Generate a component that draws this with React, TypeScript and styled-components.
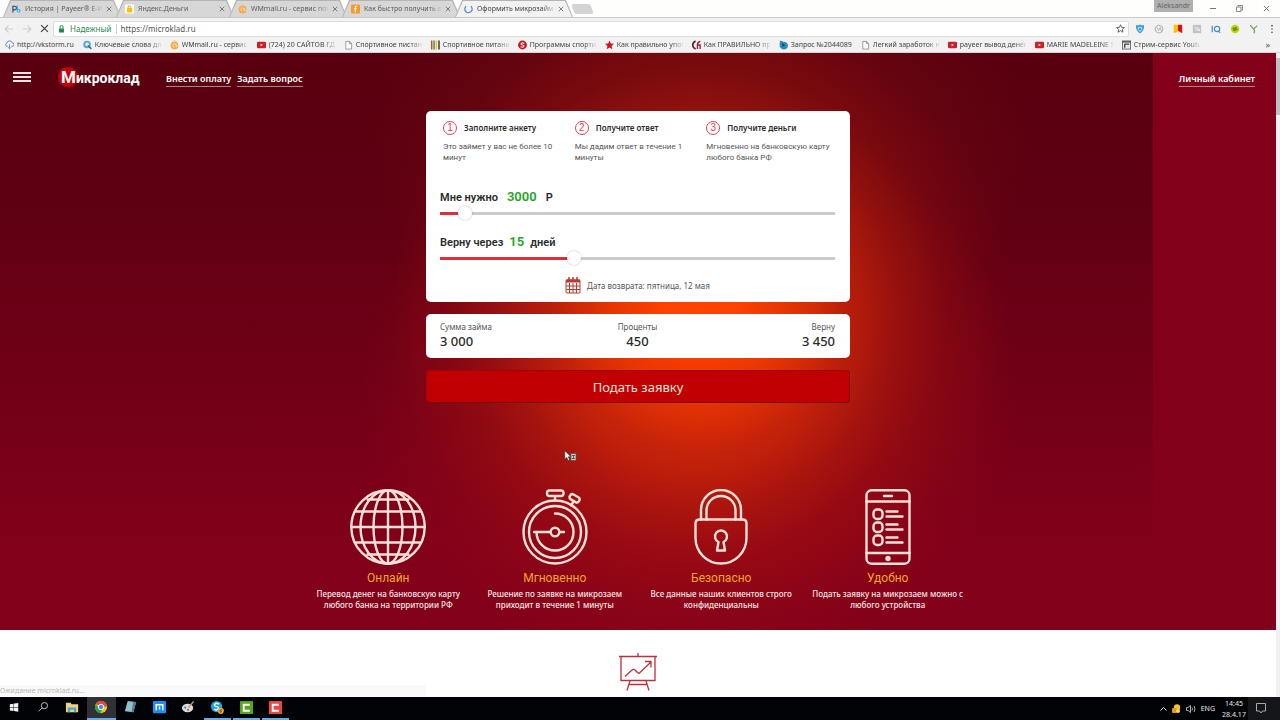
import React, { useState } from 'react';
import styled, { createGlobalStyle, css } from 'styled-components';

const GlobalStyle = createGlobalStyle`
  * { box-sizing: border-box; }
  body { margin: 0; background: #fff; font-family: "Noto Sans", "Open Sans", sans-serif; }
  button, input, a { font-family: inherit; }
  button { border: 0; padding: 0; background: none; color: inherit; cursor: pointer; }
  a { color: inherit; text-decoration: none; }
  svg { display: block; flex: none; }
  h1, h2, h3, p, ul, ol, dl, dd { margin: 0; padding: 0; }
  ul, ol { list-style: none; }
`;

const Screen = styled.div`
  min-height: 100vh;
  display: flex;
  flex-direction: column;
`;

/* ---------- browser chrome ---------- */

const TabStrip = styled.header`
  display: flex;
  justify-content: space-between;
  height: 18px;
  padding-left: 3px;
  background: #fefefd;
  border-bottom: 1px solid #c9c9c9;
`;

const Tabs = styled.div`
  display: flex;
  align-items: flex-end;
`;

const slant = 'polygon(7px 0, calc(100% - 7px) 0, 100% 100%, 0 100%)';

const TabEdge = styled.div<{ $active?: boolean }>`
  width: 118px;
  height: 17px;
  margin-right: -5px;
  padding: 1px 1px 0;
  clip-path: ${slant};
  background: #b4b4b4;
  position: relative;
  z-index: ${(p) => (p.$active ? 1 : 0)};
`;

const TabFace = styled.div<{ $active?: boolean }>`
  display: flex;
  align-items: center;
  gap: 4px;
  height: 16px;
  padding: 0 8px;
  clip-path: ${slant};
  background: ${(p) => (p.$active ? '#f2f2f2' : '#d6d7d6')};
  color: ${(p) => (p.$active ? '#444' : '#5c5c5c')};
`;

const fade = css`
  overflow: hidden;
  white-space: nowrap;
  mask-image: linear-gradient(to right, #000 calc(100% - 12px), rgba(0, 0, 0, 0.15));
`;

const TabTitle = styled.span`
  flex: 1;
  font-size: 7px;
  line-height: 14px;
  ${fade}
`;

const IconButton = styled.button`
  display: grid;
  place-items: center;
  flex: none;
`;

const NewTab = styled.button`
  width: 19px;
  height: 10px;
  margin: 0 0 3px 5px;
  background: #d2d3d2;
  border-radius: 2px;
  transform: skewX(20deg);
`;

const WindowControls = styled.div`
  display: flex;
  align-items: flex-start;
  color: #777;
`;

const UserBadge = styled.span`
  width: 39px;
  height: 12px;
  margin-right: 6px;
  background: #b0b0b0;
  color: #666;
  font-size: 7px;
  line-height: 11px;
  text-align: center;
`;

const WindowButton = styled(IconButton)`
  width: 27px;
  height: 16px;
`;

const Toolbar = styled.div`
  display: flex;
  align-items: center;
  height: 19px;
  padding-top: 2px;
  background: #f2f2f2;
`;

const NavButtons = styled.div`
  display: flex;
  flex: none;
  width: 53px;
  gap: 8px;
  padding-left: 4px;
`;

const Omnibox = styled.form`
  display: flex;
  align-items: center;
  flex: 1;
  height: 16px;
  padding: 0 3px 0 5px;
  background: #fff;
  border: 1px solid #dcdcdc;
  border-radius: 2px;
  font-size: 8px;
`;

const Secure = styled.span`
  padding: 0 4px 0 6px;
  margin-right: 4px;
  line-height: 10px;
  color: #2c8a52;
  border-right: 1px solid #ccc;
`;

const UrlInput = styled.input`
  flex: 1;
  min-width: 0;
  height: 12px;
  padding: 0;
  border: 0;
  outline: 0;
  background: transparent;
  font-size: 8px;
  color: #555;
`;

const Extensions = styled.div`
  display: flex;
  flex: none;
  padding-left: 1px;
`;

const ExtButton = styled(IconButton)`
  width: 19px;
  height: 14px;
  &:last-child { width: 17px; }
`;

const BookmarkBar = styled.nav`
  display: flex;
  align-items: center;
  gap: 9px;
  height: 16px;
  padding: 0 10px 0 5px;
  background: #f2f2f2;
  border-bottom: 1px solid #d8d2d2;
`;

const Bookmark = styled.a`
  display: flex;
  align-items: center;
  gap: 3px;
  flex: none;
  font-size: 7px;
  line-height: 14px;
  color: #444;
`;

const BookmarkText = styled.span<{ $whole?: boolean }>`
  ${(p) => (p.$whole ? 'white-space: nowrap;' : css`width: 66px; ${fade}`)}
`;

const More = styled.button`
  margin-left: auto;
  font-size: 9px;
  line-height: 12px;
  color: #555;
`;

/* ---------- web page ---------- */

const Viewport = styled.div`
  position: relative;
  flex: 1;
  display: flex;
`;

const Page = styled.div`
  flex: 1;
  min-width: 0;
  display: flex;
  flex-direction: column;
`;

const Scrollbar = styled.div`
  width: 4px;
  padding-top: 5px;
  background: #f1f1f1;
  &::before {
    content: '';
    display: block;
    height: 57px;
    background: #c1c1c1;
  }
`;

const Hero = styled.div`
  position: relative;
  padding-bottom: 20px;
  background-color: #82001a;
  background-image:
    radial-gradient(ellipse 310px 300px at 700px 255px,
      rgba(255, 68, 0, 1) 0, rgba(255, 66, 0, 0.97) 12%, rgba(245, 60, 0, 0.8) 30%,
      rgba(225, 48, 4, 0.56) 46%, rgba(200, 36, 6, 0.34) 64%, rgba(180, 24, 8, 0.16) 80%,
      rgba(150, 8, 14, 0) 100%),
    radial-gradient(ellipse 330px 290px at 690px 340px,
      rgba(195, 32, 12, 0.8) 0, rgba(190, 28, 12, 0.65) 30%, rgba(175, 18, 14, 0.35) 60%,
      rgba(150, 8, 18, 0) 100%),
    radial-gradient(ellipse 330px 240px at 700px 90px, rgba(170, 30, 14, 0.4) 0, rgba(140, 10, 16, 0) 100%),
    linear-gradient(to bottom, #58000f 0, #5f0012 26%, #740018 62%, #82001a 86%);
  background-size: 1153px 100%;
  background-repeat: no-repeat;
`;

const SiteHeader = styled.header`
  display: flex;
  align-items: center;
  height: 48px;
  padding: 0 21px 0 13px;
  color: #fff;
`;

const MenuButton = styled.button`
  display: flex;
  flex-direction: column;
  justify-content: space-between;
  width: 18px;
  height: 10px;
  margin-right: 27px;
  &::before, &::after, & > span {
    content: '';
    height: 2px;
    width: 100%;
    background: #f4e4e4;
  }
`;

const Logo = styled.a`
  display: block;
  width: 108px;
  padding-left: 3px;
  font-family: Roboto, sans-serif;
  font-size: 14px;
  line-height: 22px;
  font-weight: 700;
  background: radial-gradient(circle at 10px 11px, #c40008 9px, transparent 11px);
  &::first-letter { font-size: 17px; }
`;

const HeaderLinks = styled.nav`
  display: flex;
  flex: 1;
  gap: 6px;
  padding-top: 5px;
`;

const HeaderLink = styled.a`
  font-size: 9px;
  line-height: 14px;
  font-weight: 600;
  border-bottom: 1px solid #b08088;
  &:last-child { margin-left: auto; }
`;

const Calculator = styled.form`
  display: flex;
  flex-direction: column;
  gap: 12px;
  width: 424px;
  max-width: 100%;
  margin: 10px auto 0;
`;

const Card = styled.section`
  padding: 9px 15px 8px 14px;
  background: #fff;
  border-radius: 5px;
  color: #2b2b2b;
`;

const Steps = styled.ol`
  display: grid;
  grid-template-columns: repeat(3, 1fr);
  height: 67px;
`;

const Step = styled.li`
  padding-left: 3px;
`;

const StepHead = styled.div`
  display: flex;
  align-items: center;
  gap: 7px;
  height: 16px;
`;

const StepNumber = styled.span`
  display: grid;
  place-items: center;
  width: 14px;
  height: 14px;
  border: 1px solid #e2434f;
  border-radius: 50%;
  color: #e2434f;
  font-family: "Liberation Sans", Arial, sans-serif;
  font-size: 10px;
  line-height: 12px;
`;

const StepTitle = styled.h3`
  font-size: 8px;
  line-height: 12px;
  font-weight: 600;
`;

const StepText = styled.p`
  margin-top: 5px;
  font-family: Roboto, sans-serif;
  font-size: 8px;
  line-height: 11px;
  color: #555;
`;

const Field = styled.div`
  height: 45px;
`;

const FieldLabel = styled.label`
  display: flex;
  align-items: baseline;
  height: 19px;
  font-family: Roboto, sans-serif;
  font-size: 11px;
  line-height: 20px;
  font-weight: 600;
`;

const FieldValue = styled.output<{ $gap: number }>`
  margin: 0 ${(p) => p.$gap}px;
  font-size: 13px;
  color: #1fa51f;
`;

const Range = styled.input`
  display: block;
  width: 100%;
  height: 14px;
  margin: 0;
  appearance: none;
  outline: 0;
  background: linear-gradient(to right, #dd3038 var(--fill), #ccc var(--fill)) center / 100% 3px no-repeat;
  &::-webkit-slider-thumb {
    appearance: none;
    width: 14px;
    height: 14px;
    border-radius: 50%;
    background: #fff;
    box-shadow: 0 0 2px rgba(0, 0, 0, 0.3);
  }
`;

const ReturnDate = styled.p`
  display: flex;
  align-items: center;
  justify-content: center;
  gap: 6px;
  height: 17px;
  font-size: 8px;
  line-height: 12px;
  color: #555;
`;

const Summary = styled.dl`
  display: grid;
  grid-template-columns: repeat(3, 1fr);
  height: 27px;
`;

const SummaryItem = styled.div<{ $align: string }>`
  text-align: ${(p) => p.$align};
`;

const SummaryLabel = styled.dt`
  font-size: 8px;
  line-height: 8px;
  color: #555;
`;

const SummaryValue = styled.dd`
  font-size: 13px;
  line-height: 20px;
  font-weight: 500;
`;

const Submit = styled.button`
  height: 33px;
  border: 1px solid #a00404;
  border-right-color: #7c0408;
  border-bottom-color: #7c0408;
  border-radius: 4px;
  background: #c00000;
  color: #fbe3dc;
  font-size: 13px;
  line-height: 20px;
`;

const Features = styled.ul`
  display: grid;
  grid-template-columns: repeat(4, 1fr);
  width: 666px;
  max-width: 100%;
  margin: 86px auto 0;
`;

const Feature = styled.li`
  display: flex;
  flex-direction: column;
  align-items: center;
  text-align: center;
`;

const FeatureTitle = styled.h2`
  margin-top: 3px;
  font-family: Roboto, sans-serif;
  font-size: 12px;
  line-height: 20px;
  font-weight: 400;
  color: #f5a623;
`;

const FeatureText = styled.p`
  width: 160px;
  font-size: 8px;
  line-height: 11px;
  font-weight: 500;
  color: #fae6e2;
`;

const Cursor = styled.svg`
  position: absolute;
  left: 564px;
  top: 397px;
`;

const Benefits = styled.section`
  flex: 1;
  display: flex;
  justify-content: center;
  padding: 23px 0 6px;
  background: #fff;
`;

const StatusBubble = styled.div`
  position: absolute;
  left: 0;
  bottom: 1px;
  width: 426px;
  height: 11px;
  background: #f9f9f9;
  color: #b8b8b8;
  font-size: 7px;
  line-height: 12px;
`;

/* ---------- taskbar ---------- */

const Taskbar = styled.footer`
  display: flex;
  justify-content: space-between;
  height: 23px;
  background: #020307;
  color: #e8e8e8;
`;

const Apps = styled.div`
  display: flex;
`;

const AppButton = styled(IconButton)<{ $open?: boolean; $focused?: boolean }>`
  width: 29px;
  height: 23px;
  background: ${(p) => (p.$focused ? '#2f3136' : 'transparent')};
  border-bottom: 2px solid transparent;
  border-image: ${(p) =>
    p.$focused
      ? 'linear-gradient(#6aa9e2, #6aa9e2) 2'
      : p.$open
        ? 'linear-gradient(to right, transparent 10%, #6aa9e2 10%, #6aa9e2 90%, transparent 90%) 2'
        : 'none'};
`;

const Tray = styled.div`
  display: flex;
  align-items: center;
  gap: 5px;
  font-size: 7px;
`;

const Clock = styled.time`
  width: 28px;
  line-height: 11px;
  text-align: center;
`;

const Notices = styled(IconButton)`
  width: 32px;
  height: 23px;
  margin-left: -5px;
  padding-right: 6px;
  background: #15161a;
`;

/* ---------- icons ---------- */

const Fav = ({ children }: { children: React.ReactNode }) => (
  <svg width="9" height="10" viewBox="0 0 10 10" aria-hidden="true">{children}</svg>
);

const icons: Record<string, React.ReactNode> = {
  payeer: (
    <Fav>
      <path d="M1 9V2h2.2a1.8 1.8 0 010 3.8H1" fill="none" stroke="#44607a" strokeWidth="1.5" />
      <path d="M6 1v7M6 5.5h1.5a1.3 1.3 0 010 2.8H6" fill="none" stroke="#3fb0e6" strokeWidth="1.3" />
    </Fav>
  ),
  yandex: (
    <Fav>
      <rect width="10" height="10" rx="1" fill="#fff" />
      <rect x="2" y="4" width="6" height="5" rx="1" fill="#f5c400" />
      <path d="M3.5 4V1.8h3V4" fill="none" stroke="#d9a800" />
    </Fav>
  ),
  wm: (
    <Fav>
      <circle cx="5" cy="5.5" r="4.3" fill="#f6a94a" />
      <path d="M6.800 5.500a1.800 1.800 0 10-1.800 1.800M6.800 4v2.500q1 1 1.700-.5" fill="none" stroke="#fff1d8" strokeWidth=".8" />
      <path d="M2.500 2L5 0l2.500 1.500" fill="none" stroke="#f0c58a" />
    </Fav>
  ),
  orange: (
    <Fav>
      <rect width="10" height="10" rx="1" fill="#f79a2b" />
      <path d="M6.800 2q-2-.6-2 1.600V8.500M3.300 4.700H6.500" fill="none" stroke="#fff" strokeWidth="1.2" />
    </Fav>
  ),
  spinner: (
    <Fav>
      <path d="M2.200 2A4.100 4.100 0 107.500 1.800" fill="none" stroke="#4285d6" strokeWidth="1.300" />
    </Fav>
  ),
  cloud: (
    <Fav>
      <path d="M3 6.500H2.200a1.900 1.900 0 010-3.700A3 3 0 018 2.500a2 2 0 010 4H7M5 4.500V9M3.500 7.700L5 9.200l1.500-1.500" fill="none" stroke="#5b7fd0" />
    </Fav>
  ),
  key: (
    <Fav>
      <circle cx="4.500" cy="4.500" r="4.200" fill="#5aa9d6" />
      <circle cx="4.500" cy="4.200" r="2" fill="#e8f4fa" />
      <path d="M5.500 5.500L9.300 9.300" stroke="#2e6f9c" strokeWidth="1.600" />
    </Fav>
  ),
  yt: (
    <Fav>
      <rect y="1.500" width="10" height="7" rx="1.300" fill="#cf1f26" />
      <path d="M4 3.500v3l2.700-1.500z" fill="#fff" />
    </Fav>
  ),
  file: (
    <Fav>
      <path d="M2 1h4l2.500 2.500V9.500H2zM6 1v2.500h2.500" fill="#fff" stroke="#8a8a8a" strokeWidth=".9" />
    </Fav>
  ),
  bars: (
    <Fav>
      <path d="M.8 0v10" stroke="#d6452f" strokeWidth="1.600" />
      <path d="M3.400 0v10" stroke="#3f8f45" strokeWidth="1.600" />
      <path d="M6 0v10" stroke="#e8c51f" strokeWidth="1.600" />
      <path d="M8.900 0v10" stroke="#333" strokeWidth="1.600" />
    </Fav>
  ),
  sRed: (
    <Fav>
      <circle cx="5" cy="5" r="4.900" fill="#c8161d" />
      <path d="M6.900 3.300Q5 1.900 3.700 3.100T5 5t1.200 1.900T3 6.800" fill="none" stroke="#fff" strokeWidth="1.200" />
    </Fav>
  ),
  star: (
    <Fav>
      <path d="M5 0l1.400 3.300 3.600.3-2.700 2.400.8 3.600L5 7.700 1.900 9.600l.8-3.600L0 3.600l3.600-.3z" fill="#d0121b" />
    </Fav>
  ),
  sixes: (
    <Fav>
      <path d="M4 .500Q.8 2 .8 5T4 9.500" fill="none" stroke="#4a2030" strokeWidth="1.800" />
      <path d="M9.300 1Q6 1.500 6 5v4.500M6 5h3v4.500" fill="none" stroke="#a51c2c" strokeWidth="1.500" />
    </Fav>
  ),
  swirl: (
    <Fav>
      <path d="M1 0l4 1.500A4.300 4.300 0 115 10 4.500 4.500 0 01.7 5z" fill="#2a8fc0" />
      <path d="M3 2.500l4 2.500-3 2.500z" fill="#134d77" />
    </Fav>
  ),
  stream: (
    <Fav>
      <rect x=".5" y=".5" width="9" height="9" fill="#e8e8e8" stroke="#666" />
      <path d="M0 1.500h10M3 4h5M3 4v4" stroke="#444" strokeWidth="1.500" />
    </Fav>
  ),
};

const X = ({ s, c = '#666' }: { s: number; c?: string }) => (
  <svg width={s} height={s} viewBox="0 0 8 8" aria-hidden="true">
    <path d="M1 1l6 6M7 1L1 7" stroke={c} strokeWidth="1.100" />
  </svg>
);

const Arrow = ({ flip }: { flip?: boolean }) => (
  <svg width="10" height="10" viewBox="0 0 10 10" aria-hidden="true">
    <path d={flip ? 'M1 5h8M5.500 1.500L9 5 5.500 8.500' : 'M9 5H1M4.500 1.500L1 5l3.500 3.500'} fill="none" stroke="#cfcfcf" strokeWidth="1.100" />
  </svg>
);

const extensions: [string, React.ReactNode][] = [
  ['Защита', <><path d="M1 1.500Q4 2 6 .5q2 1.500 5 1 0 7-5 10-5-3-5-10z" fill="#3a9bd0" /><path d="M4 4h4v2.500L6 9 4 6.500z" fill="none" stroke="#dff" /></>],
  ['Метка', <><circle cx="6" cy="6" r="4.500" fill="none" stroke="#bbb" strokeWidth="1.500" /><path d="M3.500 4l2 4 2-4 2 6" fill="none" stroke="#aaa" /></>],
  ['Закладки', <><path d="M1 1h5v8l-5 2z" fill="#f8c400" /><path d="M6 1h5v10L6 8z" fill="#e01010" /></>],
  ['Панель', <><rect x="1" y="1" width="10" height="10" fill="#c2c2c2" /><path d="M3 4h2v4M7 4v4h2V6H7" fill="none" stroke="#f4f4f4" /></>],
  ['IQ', <><path d="M1.500 2v8" stroke="#4a90c0" strokeWidth="1.500" /><circle cx="7.300" cy="6" r="3.200" fill="none" stroke="#4a90c0" strokeWidth="1.400" /><path d="M8 8l3 2.500" stroke="#4a90c0" strokeWidth="1.300" /></>],
  ['Обмен', <><circle cx="6" cy="6" r="5" fill="#c4d600" /><path d="M3 5h5L6.500 3.500M9 7H4l1.500 1.500" fill="none" stroke="#3c6a20" strokeWidth="1.200" /></>],
  ['Росток', <path d="M1.500 1.500L5.500 6 10 2M5.500 6q2 2 .5 5" fill="none" stroke="#6fa55a" strokeWidth="1.400" />],
  ['Меню', <><circle cx="6" cy="2" r="1" fill="#555" /><circle cx="6" cy="6" r="1" fill="#555" /><circle cx="6" cy="10" r="1" fill="#555" /></>],
];

const Calendar = () => (
  <svg width="16" height="17" viewBox="0 0 16 17" aria-hidden="true">
    <g fill="none" stroke="#b9382f">
      <rect x="1" y="3" width="14" height="13" rx="1" />
      <path d="M1 4h14" strokeWidth="3" />
      <path d="M4.500 6v10M8 6v10M11.500 6v10M1 9h14M1 12.500h14" />
      <path d="M4 0v4M8 0v4M12 0v4" strokeWidth="1.500" />
    </g>
  </svg>
);

const FeatureIcon = ({ children }: { children: React.ReactNode }) => (
  <svg width="76" height="76" viewBox="0 0 76 76" fill="none" stroke="#fbe0d6" strokeWidth="2.400" strokeLinecap="round" strokeLinejoin="round" aria-hidden="true">
    {children}
  </svg>
);

const Globe = () => (
  <FeatureIcon>
    <circle cx="38" cy="38" r="36.700" />
    <ellipse cx="38" cy="38" rx="27.500" ry="36.700" />
    <ellipse cx="38" cy="38" rx="14.500" ry="36.700" />
    <path d="M38 1.300v73.400M1.300 38h73.400M6 22.500h64M6 53.500h64M17.500 10.500h41M17.500 65.500h41" />
  </FeatureIcon>
);

const Stopwatch = () => (
  <FeatureIcon>
    <circle cx="38" cy="43" r="31.500" />
    <circle cx="38" cy="43" r="26" />
    <path d="M38 24.500a18.500 18.500 0 11-18.500 18.500H17H33.500M43 43h4" />
    <circle cx="38" cy="43" r="4.300" />
    <rect x="30" y="1.500" width="16.500" height="5.500" rx="2.500" />
    <path d="M38 7.500v4M54 16.500l2.500-4" />
    <rect x="52.500" y="6.500" width="10.500" height="5.500" rx="2.500" transform="rotate(30 57.500 9)" />
  </FeatureIcon>
);

const Padlock = () => (
  <FeatureIcon>
    <path d="M16.500 30.500h43q4 0 4 4V49a25.300 25.300 0 01-51 0V34.500q0-4 4-4z" />
    <path d="M18 30.500V21a20 20 0 0140 0v9.500M23.500 30.500V21.500a14.500 14.500 0 0129 0v9" />
    <path d="M35.500 53a6 6 0 115 0l1.500 8.500h-8z" />
  </FeatureIcon>
);

const Phone = () => (
  <FeatureIcon>
    <rect x="16.500" y="1.300" width="43" height="73.400" rx="5" />
    <path d="M16.500 12.500h43M16.500 64h43M34 7h8" />
    <circle cx="38" cy="69.500" r="1.500" fill="#fbe0d6" />
    {[25, 38, 51].map((y) => (
      <g key={y}>
        <rect x="23.500" y={y - 4.500} width="9" height="9.500" rx="3.500" />
        <path d={`M36.500 ${y - 2.500}h11M36.500 ${y + 2.500}h16`} />
      </g>
    ))}
  </FeatureIcon>
);

const Chart = () => (
  <svg width="38" height="38" viewBox="0 0 38 38" fill="none" stroke="#b8313c" strokeWidth="1.300" aria-hidden="true">
    <path d="M19 0v3M0 3.500h38M2 4v23.500h34V4M11 28L8 37.500M27 28l3 9.500M10 31.500h18" />
    <path d="M6 23.500l7-6.500q2-1.500 3.500.500T20 20.500L32 9M26 8.500h6v6" />
  </svg>
);

const taskIcons: { name: string; open?: boolean; focused?: boolean; art: React.ReactNode }[] = [
  { name: 'Пуск', art: <path d="M3 4.500l4-.6V7.500H3zM7.500 3.800l4.500-.6v4.300H7.500zM3 8h4v3.700l-4-.6zM7.500 8H12v4.400l-4.500-.6z" fill="#f2f2f2" /> },
  { name: 'Поиск', art: <><circle cx="9" cy="6" r="3.300" fill="none" stroke="#ccc" /><path d="M6.500 8.500L3 12" stroke="#ccc" /></> },
  { name: 'Проводник', art: <><path d="M1 3h5l1 1.500h7V13H1z" fill="#f1d37c" /><path d="M3 8h9v5H9.500v-2.500h-4V13H3z" fill="#4aa3d8" /></> },
  { name: 'Chrome', focused: true, art: <><circle cx="7.500" cy="7.500" r="6.500" fill="#f5c518" /><path d="M1.900 4.200A6.500 6.500 0 0114 7H7.500z" fill="#dd4b39" /><path d="M1.900 4.200A6.500 6.500 0 007 14l2.500-5.500-4.500 0z" fill="#2ea04f" /><circle cx="7.500" cy="7.500" r="2.900" fill="#4a8af4" stroke="#fff" /></> },
  { name: 'Блокнот', art: <><path d="M5 1l9 1-3 11-9-1z" fill="#8fc1cc" /><path d="M11 2l3 0-3 11-2-.2z" fill="#4f7f8c" /></> },
  { name: 'Maxthon', art: <><rect x="1" y="1" width="14" height="13" rx="1" fill="#1d8ff0" /><path d="M4.500 11V5h7v6M8 7v3" fill="none" stroke="#fff" strokeWidth="1.500" /></> },
  { name: 'Paint', art: <><ellipse cx="7" cy="8.500" rx="6" ry="4.500" fill="#d8dcdc" /><circle cx="4.500" cy="8" r="1.200" fill="#4a7fc0" /><circle cx="7.500" cy="10.500" r="1.200" fill="#b64" /><path d="M8 8l5.500-6.500" stroke="#c99a5a" strokeWidth="1.500" /></> },
  { name: 'Skype', open: true, art: <><circle cx="7" cy="7" r="6" fill="#1ba5e0" /><path d="M9.500 4.500Q7 2.500 5.300 4.300T7 7t1.500 2.700T4.500 9.500" fill="none" stroke="#fff" strokeWidth="1.500" /><circle cx="11.500" cy="11.500" r="3.300" fill="#f0a830" /><path d="M12.500 10q-2 .3-2 2t1 1 .9-1.300-1.600-.2" fill="none" stroke="#543" strokeWidth=".8" /></> },
  { name: 'Camtasia', open: true, art: <><rect x="1" y="1" width="14" height="14" rx="1" fill="#57a51c" /><path d="M11.500 5H5v6.500h6.500" fill="none" stroke="#fff" strokeWidth="2" /></> },
  { name: 'Запись экрана', open: true, art: <><rect x="1" y="1" width="14" height="14" rx="1" fill="#e8483f" /><path d="M11.500 5H5v6.500h6.500" fill="none" stroke="#fff" strokeWidth="2" /></> },
];

/* ---------- data ---------- */

const tabs = [
  { icon: 'payeer', title: 'История | Payeer® E-W' },
  { icon: 'yandex', title: 'Яндекс.Деньги' },
  { icon: 'wm', title: 'WMmail.ru - сервис поч' },
  { icon: 'orange', title: 'Как быстро получить о' },
  { icon: 'spinner', title: 'Оформить микрозайм о', active: true },
];

const bookmarks: [string, string, boolean?][] = [
  ['cloud', 'http://vkstorm.ru', true],
  ['key', 'Ключевые слова для'],
  ['wm', 'WMmail.ru - сервис п'],
  ['yt', '(724) 20 САЙТОВ ГДЕ'],
  ['file', 'Спортивное пистани'],
  ['bars', 'Спортивное питани'],
  ['sRed', 'Программы спортив'],
  ['star', 'Как правильно упот'],
  ['sixes', 'Как ПРАВИЛЬНО пр'],
  ['swirl', 'Запрос №2044089', true],
  ['file', 'Легкий заработок на'],
  ['yt', 'payeer вывод денег'],
  ['yt', 'MARIE MADELEINE S'],
  ['stream', 'Стрим-сервис Youtu'],
];

const steps = [
  ['Заполните анкету', 'Это займет у вас не более 10 минут'],
  ['Получите ответ', 'Мы дадим ответ в течение 1 минуты'],
  ['Получите деньги', 'Мгновенно на банковскую карту любого банка РФ'],
];

const features: [React.ReactNode, string, string][] = [
  [<Globe />, 'Онлайн', 'Перевод денег на банковскую карту любого банка на территории РФ'],
  [<Stopwatch />, 'Мгновенно', 'Решение по заявке на микрозаем приходит в течение 1 минуты'],
  [<Padlock />, 'Безопасно', 'Все данные наших клиентов строго конфиденциальны'],
  [<Phone />, 'Удобно', 'Подать заявку на микрозаем можно с любого устройства'],
];

const spaced = (n: number) => String(n).replace(/\B(?=(\d{3})+$)/g, ' ');

type SliderProps = {
  id: string; label: string; unit: string; gap: number;
  min: number; max: number; step: number; value: number;
  onChange: (v: number) => void;
};

const Slider = ({ id, label, unit, gap, min, max, step, value, onChange }: SliderProps) => {
  const ratio = (value - min) / (max - min);
  return (
    <Field>
      <FieldLabel htmlFor={id}>
        {label}
        <FieldValue $gap={gap}>{value}</FieldValue>
        {unit}
      </FieldLabel>
      <Range
        id={id}
        type="range"
        min={min}
        max={max}
        step={step}
        value={value}
        onChange={(e) => onChange(Number(e.target.value))}
        style={{ '--fill': `calc(7px + (100% - 14px) * ${ratio})` } as React.CSSProperties}
      />
    </Field>
  );
};

export default function App() {
  const [sum, setSum] = useState(3000);
  const [days, setDays] = useState(15);
  const [url, setUrl] = useState('https://microklad.ru');
  const interest = Math.round((sum * days) / 100);

  return (
    <Screen>
      <GlobalStyle />
      <TabStrip>
        <Tabs>
          {tabs.map((t) => (
            <TabEdge key={t.title} $active={t.active}>
              <TabFace $active={t.active}>
                {icons[t.icon]}
                <TabTitle>{t.title}</TabTitle>
                <IconButton aria-label="Закрыть вкладку"><X s={6} /></IconButton>
              </TabFace>
            </TabEdge>
          ))}
          <NewTab aria-label="Новая вкладка" />
        </Tabs>
        <WindowControls>
          <UserBadge>Aleksandr</UserBadge>
          <WindowButton aria-label="Свернуть">
            <svg width="6" height="6" viewBox="0 0 6 6"><path d="M0 3.500h6" stroke="#777" /></svg>
          </WindowButton>
          <WindowButton aria-label="Восстановить">
            <svg width="7" height="7" viewBox="0 0 7 7" fill="none" stroke="#888"><path d="M.5 2h4.500v4.500H.5zM2 2V.5h4.500V5H5" /></svg>
          </WindowButton>
          <WindowButton aria-label="Закрыть"><X s={7} c="#777" /></WindowButton>
        </WindowControls>
      </TabStrip>

      <Toolbar>
        <NavButtons>
          <IconButton aria-label="Назад"><Arrow /></IconButton>
          <IconButton aria-label="Вперёд"><Arrow flip /></IconButton>
          <IconButton aria-label="Остановить"><X s={9} c="#444" /></IconButton>
        </NavButtons>
        <Omnibox onSubmit={(e) => e.preventDefault()}>
          <svg width="5" height="8" viewBox="0 0 5 8"><path d="M0 3.500h5V7.500H0z" fill="#1f8a4c" /><path d="M1 3.500V2a1.500 1.500 0 013 0v1.500" fill="none" stroke="#1f8a4c" /></svg>
          <Secure>Надежный</Secure>
          <UrlInput aria-label="Адрес" value={url} onChange={(e) => setUrl(e.target.value)} />
          <IconButton type="button" aria-label="В закладки">
            <svg width="9" height="9" viewBox="0 0 10 10"><path d="M5 .8l1.200 2.900 3.200.2-2.400 2.100.7 3.100L5 7.400 2.300 9.100 3 6 .6 3.900l3.200-.2z" fill="none" stroke="#555" /></svg>
          </IconButton>
        </Omnibox>
        <Extensions>
          {extensions.map(([name, art]) => (
            <ExtButton key={name} aria-label={name}>
              <svg width="10" height="10" viewBox="0 0 12 12">{art}</svg>
            </ExtButton>
          ))}
        </Extensions>
      </Toolbar>

      <BookmarkBar>
        {bookmarks.map(([icon, text, whole]) => (
          <Bookmark key={text} href="#">
            {icons[icon]}
            <BookmarkText $whole={whole}>{text}</BookmarkText>
          </Bookmark>
        ))}
        <More aria-label="Другие закладки">»</More>
      </BookmarkBar>

      <Viewport>
        <Page>
          <Hero>
            <SiteHeader>
              <MenuButton aria-label="Меню"><span /></MenuButton>
              <Logo href="#">Микроклад</Logo>
              <HeaderLinks>
                <HeaderLink href="#">Внести оплату</HeaderLink>
                <HeaderLink href="#">Задать вопрос</HeaderLink>
                <HeaderLink href="#">Личный кабинет</HeaderLink>
              </HeaderLinks>
            </SiteHeader>

            <Calculator onSubmit={(e) => e.preventDefault()}>
              <Card>
                <Steps>
                  {steps.map(([title, text], i) => (
                    <Step key={title}>
                      <StepHead>
                        <StepNumber>{i + 1}</StepNumber>
                        <StepTitle>{title}</StepTitle>
                      </StepHead>
                      <StepText>{text}</StepText>
                    </Step>
                  ))}
                </Steps>
                <Slider id="sum" label="Мне нужно" unit="Р" gap={9} min={2000} max={23000} step={1000} value={sum} onChange={setSum} />
                <Slider id="days" label="Верну через" unit="дней" gap={6} min={5} max={35} step={1} value={days} onChange={setDays} />
                <ReturnDate><Calendar />Дата возврата: пятница, 12 мая</ReturnDate>
              </Card>
              <Card>
                <Summary>
                  <SummaryItem $align="left"><SummaryLabel>Сумма займа</SummaryLabel><SummaryValue>{spaced(sum)}</SummaryValue></SummaryItem>
                  <SummaryItem $align="center"><SummaryLabel>Проценты</SummaryLabel><SummaryValue>{spaced(interest)}</SummaryValue></SummaryItem>
                  <SummaryItem $align="right"><SummaryLabel>Верну</SummaryLabel><SummaryValue>{spaced(sum + interest)}</SummaryValue></SummaryItem>
                </Summary>
              </Card>
              <Submit type="submit">Подать заявку</Submit>
            </Calculator>

            <Features>
              {features.map(([icon, title, text]) => (
                <Feature key={title}>
                  {icon}
                  <FeatureTitle>{title}</FeatureTitle>
                  <FeatureText>{text}</FeatureText>
                </Feature>
              ))}
            </Features>

            <Cursor width="13" height="12" viewBox="0 0 13 12" aria-hidden="true">
              <path d="M.8.8v8.400l2-1.800 1.400 3 1.400-.7-1.300-2.900H7z" fill="#fff" stroke="#333" strokeWidth=".6" />
              <rect x="7" y="3.500" width="5" height="7" fill="#d8c8c8" stroke="#555" strokeWidth=".7" />
              <path d="M8 5.500h3M8 8.500h3M9.500 5.500v3" stroke="#444" strokeWidth=".8" />
            </Cursor>
          </Hero>
          <Benefits><Chart /></Benefits>
        </Page>
        <Scrollbar />
        <StatusBubble>Ожидание microklad.ru...</StatusBubble>
      </Viewport>

      <Taskbar>
        <Apps>
          {taskIcons.map((t) => (
            <AppButton key={t.name} aria-label={t.name} $open={t.open} $focused={t.focused}>
              <svg width="15" height="15" viewBox="0 0 16 16">{t.art}</svg>
            </AppButton>
          ))}
        </Apps>
        <Tray>
          <svg width="7" height="6" viewBox="0 0 7 6"><path d="M.5 4.500l3-3 3 3" fill="none" stroke="#ddd" /></svg>
          <svg width="9" height="10" viewBox="0 0 9 10"><circle cx="5" cy="3.500" r="3.200" fill="#f2c230" /><rect x="0" y="4" width="5" height="5" rx="1" fill="#d89b1c" /><circle cx="6" cy="7" r="2" fill="#f6d869" /></svg>
          <svg width="10" height="8" viewBox="0 0 10 8" fill="none" stroke="#aaa"><path d="M.5 2.500h1.500L4.500.5v7L2 5.500H.5zM6 2.500q1 1.500 0 3M8 1q2 3 0 6" /></svg>
          <span>ENG</span>
          <Clock>14:45<br />28.4.17</Clock>
          <Notices aria-label="Уведомления">
            <svg width="10" height="11" viewBox="0 0 10 11"><path d="M.5.5h9v7.500H6.500L5 10 3.500 8h-3z" fill="none" stroke="#aaa" /></svg>
          </Notices>
        </Tray>
      </Taskbar>
    </Screen>
  );
}
